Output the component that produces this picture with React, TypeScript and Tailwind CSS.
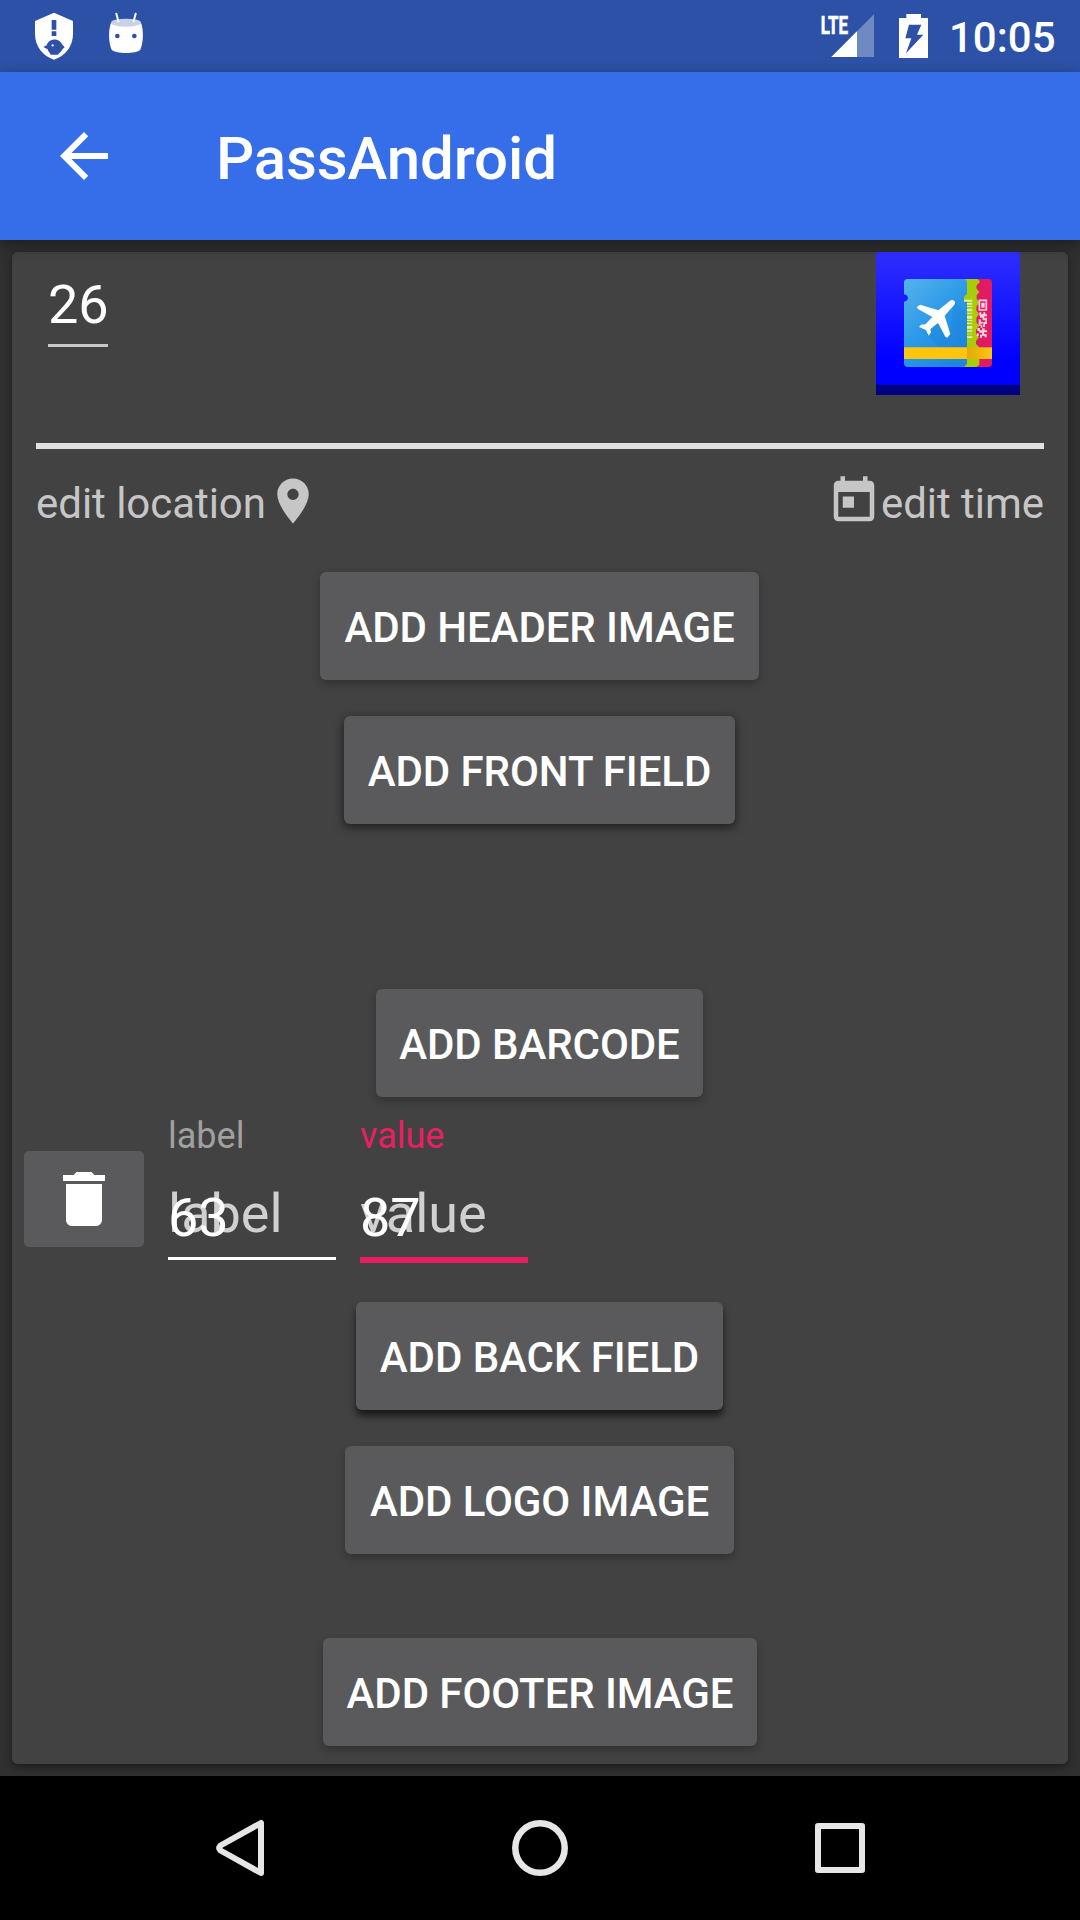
import React from "react";

const elevations = {
  low: "shadow-[0_4px_8px_rgba(0,0,0,0.26)]",
  mid: "shadow-[0_3px_8px_1px_rgba(0,0,0,0.5)]",
  high: "shadow-[0_6px_7px_0px_rgba(0,0,0,0.62)]",
};

function ActionButton({ label, width, elevation = "low" }: { label: string; width: string; elevation?: keyof typeof elevations }) {
  return (
    <button
      className={`flex h-[108px] shrink-0 items-center justify-center self-center rounded-[6px] bg-[#5a5a5c] pt-[3px] text-[42px] leading-none font-medium tracking-[-0.08px] whitespace-nowrap text-white ${width} ${elevations[elevation]}`}
    >
      {label}
    </button>
  );
}

function StatusBar() {
  return (
    <div className="flex h-[72px] shrink-0 items-start bg-[#2c51a7]">
      <svg className="ml-[33px] h-[72px] w-[42px]" viewBox="99 0 126 216">
        <path fill="#fff" d="M162 38 L219 63 V102 C219 140 195 168 162 179 C129 168 105 140 105 102 V63 Z" />
        <path fill="#2c51a7" d="M155 60h14v29h-14zM155 94h14v14h-14zM130 141L140 136C146 114 178 112 186 133L194 142L188 147C184 156 178 158 174 164H152C150 157 144 156 143 148Z" />
        <circle cx="158" cy="136" r="3.5" fill="#dfe5f3" />
      </svg>
      <svg className="ml-[33px] h-[72px] w-[36px]" viewBox="324 0 108 216">
        <path fill="#fff" d="M333 68 C345 80 411 80 423 68 C431 88 431 128 421 149 C408 162 348 162 335 149 C325 128 325 88 333 68Z" />
        <ellipse cx="378" cy="68" rx="45" ry="12" fill="#c9d1e8" />
        <path stroke="#fff" strokeWidth="6" strokeLinecap="round" d="M349 41l6 23M407 41l-6 23" />
        <circle cx="352" cy="108" r="7" fill="#2c51a7" />
        <circle cx="403" cy="108" r="7" fill="#2c51a7" />
      </svg>
      <svg className="ml-auto h-[72px] w-[54px]" viewBox="120 0 162 216">
        <path fill="#fff" fillOpacity=".32" d="M282 43V171H154Z" />
        <path fill="#fff" d="M231 94V171H154Z" />
        <text x="122" y="101" fontSize="79" fontWeight="700" fill="#fff" stroke="#fff" strokeWidth="2" textLength="82" lengthAdjust="spacingAndGlyphs">LTE</text>
      </svg>
      <svg className="ml-[25px] h-[72px] w-[29px]" viewBox="357 0 87 216">
        <path fill="#fff" d="M379 42H423V54H444V174H357V54H379Z" />
        <path fill="#2c51a7" d="M387 74H424L411 104H430L378 160L394 115H376Z" />
      </svg>
      <span className="mr-[24.5px] ml-[20.5px] pt-[2px] text-[42px] leading-[72px] font-medium text-white">10:05</span>
    </div>
  );
}

function PassIcon() {
  return (
    <svg className="mr-12 h-[143px] w-[144px]" viewBox="48 36 432 429" preserveAspectRatio="none">
      <defs>
        <linearGradient id="tile" x1="0" y1="0" x2="0" y2="1">
          <stop offset="0" stopColor="#2f2fff" />
          <stop offset=".75" stopColor="#0000ff" />
        </linearGradient>
        <linearGradient id="ticket" x1="0" y1="0" x2=".7" y2="1">
          <stop offset="0" stopColor="#55b3ec" />
          <stop offset=".55" stopColor="#2b98e8" />
          <stop offset="1" stopColor="#1e88e0" />
        </linearGradient>
        <linearGradient id="band">
          <stop offset="0" stopColor="#e0a80c" />
          <stop offset="1" stopColor="#ffc60d" />
        </linearGradient>
      </defs>
      <path fill="url(#tile)" d="M48 36H480V465H48Z" />
      <path fill="#000080" d="M48 434H480V465H48Z" />
      <path fill="#e01b62" d="M340 117H386Q396 117 396 128V370Q396 381 386 381H340Z" />
      <path fill="#a8cc06" d="M310 117H354L360 126L350 136L349 145L358 156L350 166V176L358 188L349 200V211L357 222L349 234V246L357 258L348 270V281L357 292L348 303V312L358 322V374L350 381H310Z" />
      <path fill="url(#ticket)" d="M143 117H313Q321 119 321 128V162Q311 168 309 180L321 184V372L312 381H143Q132 381 132 370V185C148 184 148 164 132 163V128Q132 117 143 117Z" />
      <path fill="#1976d2" fillOpacity=".22" d="M284 184L321 224V322H238L184 269L208 285L236 240L265 292Z" />
      <path fill="#ffc60d" d="M132 322H321V357H132Z" />
      <path fill="url(#band)" d="M321 322H396V357H321Z" />
      <path fill="#e9f3c8" fillOpacity=".85" d="M312 179H337V185H312zM321 189H337V194H321zM321 198H337V201H321zM321 206H337V214H321zM321 218H337V221H321zM321 227H337V236H321zM321 240H337V243H321zM321 248H337V252H321zM321 258H337V266H321zM321 271H337V275H321zM321 281H337V283H321zM321 289H337V294H321z" />
      <path fill="none" stroke="#f9d5e2" strokeWidth="5" d="M358 181H379V210H358Z" />
      <path fill="#f9d5e2" d="M364 188H374V203H364zM358 217H364V223H370V217H376V223H381V229H373V235H379V241H368V233H360V227H358zM356 238H362V245H368V251H361V257H356zM370 246H381V252H375V261H369V256H370zM352 264H360V271H366V265H374V271H381V277H372V282H380V292H374V287H366V293H360V284H366V278H358V273H352zM350 280H356V288H350zM362 254H367V263H362zM376 233H381V246H376zM366 222H371V228H366z" />
      <path fill="#fff" d="M269 183C276 178 285 180 285 189L283 194L254 227L271 282L262 293L256 290L234 249L211 267L213 277L206 287L198 270L177 261L183 254L196 253L217 231L174 207L170 201L181 194L235 211Z" />
    </svg>
  );
}

function FloatingField({ name, value, active = false }: { name: string; value: string; active?: boolean }) {
  return (
    <label className="flex w-[168px] flex-col pt-[18px]">
      <span className={active ? "text-[36px] leading-[42px] text-[#e91e63]" : "text-[36px] leading-[42px] text-[#a0a0a0]"}>{name}</span>
      <span className="relative block h-[100px] text-[54px] leading-[64px]">
        <span className="absolute top-[25px] left-0 text-[#d0d0d0]">{name}</span>
        <span className="absolute top-[29px] left-0 text-white">{value}</span>
      </span>
      <span className={active ? "h-[6px] bg-[#e91e63]" : "h-[3px] bg-white"} />
    </label>
  );
}

export default function App() {
  return (
    <div className="flex h-[1920px] w-[1080px] flex-col overflow-hidden bg-[#303030] font-['Roboto',sans-serif]">
      <StatusBar />
      <header className="relative z-10 flex h-[168px] shrink-0 items-center bg-[#366de8] shadow-[0_5px_14px_rgba(0,0,0,0.4)]">
        <svg className="ml-12 size-[72px]" viewBox="0 0 24 24" fill="#fff">
          <path d="M20 11H7.83l5.59-5.59L12 4l-8 8 8 8 1.41-1.41L7.83 13H20v-2z" />
        </svg>
        <h1 className="ml-24 pt-[5px] text-[60px] leading-none font-medium tracking-[-0.12px] text-white">PassAndroid</h1>
      </header>

      <main className="flex-1 p-3">
        <section className="flex h-[1512px] flex-col rounded-[6px] bg-[#424242] shadow-[0_3px_9px_rgba(0,0,0,0.45)]">
          <div className="flex h-[191px] shrink-0 items-start justify-between">
            <div className="ml-9 flex w-[60px] flex-col pt-5">
              <span className="h-[72px] text-[54px] leading-[65px] text-white">26</span>
              <span className="h-[3px] bg-[#c8c8c8]" />
            </div>
            <PassIcon />
          </div>
          <div className="mx-6 h-[6px] shrink-0 bg-[#e0e0e0]" />
          <div className="mx-6 flex h-[108px] shrink-0 items-center justify-between text-[42px] leading-none tracking-[-0.04px] text-[#c6c6c6]">
            <div className="flex items-center">
              <span className="pt-[1px]">edit location</span>
              <svg className="mb-[5px] size-[54px]" viewBox="0 0 24 24" fill="#c6c6c6">
                <path d="M12 2C8.13 2 5 5.13 5 9c0 5.25 7 13 7 13s7-7.75 7-13c0-3.87-3.13-7-7-7zm0 9.5c-1.38 0-2.5-1.12-2.5-2.5s1.12-2.5 2.5-2.5 2.500 1.120 2.500 2.500-1.120 2.500-2.500 2.500z" />
              </svg>
            </div>
            <div className="flex items-center">
              <svg className="mb-[5px] size-[54px]" viewBox="0 0 24 24" fill="#c6c6c6">
                <path d="M19 3h-1V1h-2v2H8V1H6v2H5c-1.110 0-1.990.9-1.990 2L3 19c0 1.100.89 2 2 2h14c1.100 0 2-.9 2-2V5c0-1.100-.9-2-2-2zm0 16H5V8h14v11zM7 10h5v5H7z" />
              </svg>
              <span className="pt-[1px]">edit time</span>
            </div>
          </div>

          <div className="flex flex-col gap-9 pt-[15px]">
            <ActionButton label="ADD HEADER IMAGE" width="mr-px w-[439px]" />
            <ActionButton label="ADD FRONT FIELD" width="mr-px w-[391px]" elevation="mid" />
          </div>
          <div className="flex flex-col pt-[165px]">
            <ActionButton label="ADD BARCODE" width="mr-px w-[327px]" />
          </div>

          <div className="flex h-[205px] shrink-0 items-start gap-6 pl-3">
            <button className="mt-[54px] flex h-24 w-[120px] items-center justify-center rounded-[5px] bg-[#5a5a5c]">
              <svg className="size-[72px]" viewBox="0 0 24 24" fill="#fff">
                <path d="M6 19c0 1.100.9 2 2 2h8c1.100 0 2-.9 2-2V7H6v12zM19 4h-3.500l-1-1h-5l-1 1H5v2h14V4z" />
              </svg>
            </button>
            <FloatingField name="label" value="63" />
            <FloatingField name="value" value="87" active />
          </div>

          <div className="flex flex-col gap-9">
            <ActionButton label="ADD BACK FIELD" width="mr-px w-[367px]" elevation="high" />
            <ActionButton label="ADD LOGO IMAGE" width="mr-px w-[389px]" />
          </div>
          <div className="flex flex-col pt-[84px]">
            <ActionButton label="ADD FOOTER IMAGE" width="w-[434px]" />
          </div>
        </section>
      </main>

      <nav className="flex h-36 shrink-0 items-center justify-center gap-[228px] bg-black">
        <svg className="size-[72px]" viewBox="0 0 72 72" fill="none" stroke="#e6e6e6" strokeWidth="6" strokeLinejoin="round">
          <path d="M57 11V61L16.500 38.500Q14 36 16.500 33.500Z" />
        </svg>
        <svg className="size-[72px]" viewBox="0 0 72 72" fill="none" stroke="#e6e6e6" strokeWidth="6.500">
          <circle cx="36" cy="36" r="24.700" />
        </svg>
        <svg className="size-[72px]" viewBox="0 0 72 72" fill="none" stroke="#e6e6e6" strokeWidth="6" strokeLinejoin="round">
          <path d="M14 14H58V58H14Z" />
        </svg>
      </nav>
    </div>
  );
}
